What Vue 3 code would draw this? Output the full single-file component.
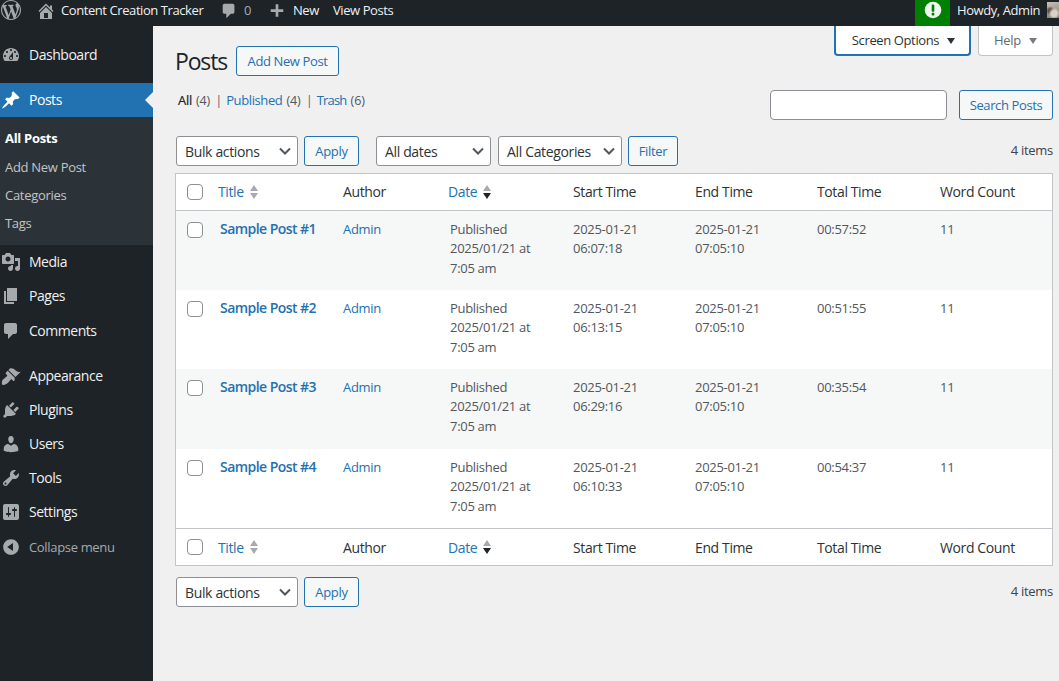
<script setup>
const icons = {
  wp: 'M20 10c0-5.51-4.49-10-10-10C4.48 0 0 4.49 0 10c0 5.52 4.48 10 10 10 5.51 0 10-4.48 10-10zM7.78 15.37L4.37 6.22c.55-.02 1.17-.08 1.17-.08.5-.06.44-1.13-.06-1.11 0 0-1.45.11-2.37.11-.18 0-.37 0-.58-.01C4.12 2.69 6.87 1.11 10 1.11c2.33 0 4.45.87 6.05 2.34-.68-.11-1.65.39-1.65 1.58 0 .74.45 1.36.9 2.1.35.61.55 1.36.55 2.46 0 1.49-1.4 5-1.4 5l-3.03-8.37c.54-.02.82-.17.82-.17.5-.05.44-1.25-.06-1.22 0 0-1.44.12-2.38.12-.87 0-2.33-.12-2.33-.12-.5-.03-.56 1.2-.06 1.22l.92.08 1.26 3.41zM17.41 10c.24-.64.74-1.87.43-4.25.7 1.29 1.05 2.71 1.05 4.25 0 3.29-1.73 6.24-4.4 7.78.97-2.59 1.94-5.2 2.92-7.78zM6.1 18.09C3.12 16.65 1.11 13.53 1.11 10c0-1.3.23-2.48.72-3.59C3.25 10.3 4.67 14.2 6.1 18.09zm4.03-6.63l2.58 6.98c-.86.29-1.76.45-2.71.45-.79 0-1.57-.11-2.29-.33.81-2.38 1.62-4.74 2.42-7.1z',
  home: 'M16 8.5l1.53 1.53-1.06 1.06L10 4.62l-6.47 6.47-1.06-1.06L10 2.5l4 4v-2h2v4zm-6-2.46l6 5.99V18H4v-5.97zM12 17v-5H8v5h4z',
  comment: 'M5 2h9c1.1 0 2 .9 2 2v7c0 1.1-.9 2-2 2h-2l-5 5v-5H5c-1.1 0-2-.9-2-2V4c0-1.1.9-2 2-2z',
  plus: 'M17 8v3h-5.5v5.5h-3V11H3V8h5.5V2.5h3V8z',
  dashboard: 'M3.76 16h12.48c1.1-1.37 1.76-3.11 1.76-5 0-4.42-3.58-8-8-8s-8 3.58-8 8c0 1.89.66 3.63 1.76 5zM10 4c.55 0 1 .45 1 1s-.45 1-1 1-1-.45-1-1 .45-1 1-1zM6 6c.55 0 1 .45 1 1s-.45 1-1 1-1-.45-1-1 .45-1 1-1zm8 0c.55 0 1 .45 1 1s-.45 1-1 1-1-.45-1-1 .45-1 1-1zm-5.37 5.55L12 7v6c0 1.1-.9 2-2 2s-2-.9-2-2c0-.57.24-1.08.63-1.45zM4 10c.55 0 1 .45 1 1s-.45 1-1 1-1-.45-1-1 .45-1 1-1zm12 0c.55 0 1 .45 1 1s-.45 1-1 1-1-.45-1-1 .45-1 1-1zm-5 3c0-.55-.45-1-1-1s-1 .45-1 1 .45 1 1 1 1-.45 1-1z',
  pin: 'M10.44 3.02l1.82-1.82 6.36 6.35-1.83 1.82c-1.05-.68-2.48-.57-3.41.36l-.75.75c-.92.93-1.04 2.35-.35 3.41l-1.83 1.82-2.41-2.41-2.8 2.79c-.42.42-3.38 2.71-3.8 2.29s1.86-3.39 2.28-3.81l2.79-2.79L4.1 9.36l1.83-1.82c1.05.69 2.48.57 3.4-.36l.75-.75c.93-.92 1.05-2.35.36-3.41z',
  media: 'M13 11V4c0-.55-.45-1-1-1h-1.67L9 1H5L3.67 3H2c-.55 0-1 .45-1 1v7c0 .55.45 1 1 1h10c.55 0 1-.45 1-1zM7 4.5c1.38 0 2.5 1.12 2.5 2.5S8.38 9.5 7 9.5 4.5 8.38 4.5 7 5.62 4.5 7 4.5zM14 6h5v10.5c0 1.38-1.12 2.5-2.5 2.5S14 17.88 14 16.5s1.12-2.5 2.5-2.5c.17 0 .34.02.5.05V9h-3V6zm-4 8.05V13h2v3.5c0 1.38-1.12 2.5-2.5 2.5S7 17.88 7 16.5 8.12 14 9.5 14c.17 0 .34.02.5.05z',
  pages: 'M6 15V2h10v13H6zm-1 1h8v2H3V5h2v11z',
  brush: 'M14.48 11.06L7.41 3.99l1.5-1.5c.5-.56 2.3-.47 3.51.32 1.21.8 1.43 1.28 2.91 2.1 1.18.64 2.45 1.26 4.45.85zm-.71.71L6.7 4.7 4.93 6.47c-.39.39-.39 1.02 0 1.41l1.06 1.06c.39.39.39 1.03 0 1.42-.6.6-1.43 1.11-2.21 1.69-.35.26-.7.53-1.01.84C1.43 13.23.28 16.01 1.2 18.8c1.69.53 4.49-.58 5.84-1.93.31-.31.58-.66.85-1.02.57-.78 1.08-1.61 1.69-2.21.39-.39 1.02-.39 1.41 0l1.06 1.06c.39.39 1.02.39 1.41 0z',
  plugin: 'M13.11 4.36L9.87 7.6 8 5.73l3.24-3.24c.35-.34 1.05-.2 1.56.32.52.51.66 1.21.31 1.55zm-8 1.77l.91-1.12 9.01 9.01-1.19.84c-.71.71-2.63 1.16-3.82 1.16H6.14L4.9 17.26c-.59.59-1.54.59-2.12 0-.59-.58-.59-1.53 0-2.12l1.24-1.24v-3.88c0-1.13.4-3.19 1.09-3.89zm7.26 3.97l3.24-3.24c.34-.35 1.04-.21 1.55.31.52.51.66 1.21.31 1.55l-3.24 3.25z',
  users: 'M10 9.25c-2.27 0-2.73-3.44-2.73-3.44C7 4.02 7.82 2 9.97 2c2.16 0 2.98 2.02 2.71 3.81 0 0-.41 3.44-2.68 3.44zm0 2.57L12.72 10c2.39 0 4.52 2.33 4.52 4.53v2.49s-3.65 1.13-7.24 1.13c-3.65 0-7.24-1.13-7.24-1.13v-2.49c0-2.25 1.94-4.48 4.47-4.48z',
  tools: 'M16.68 9.77c-1.34 1.34-3.3 1.67-4.95.99l-5.41 6.52c-.99.99-2.59.99-3.58 0s-.99-2.59 0-3.57l6.52-5.42c-.68-1.65-.35-3.61.99-4.95 1.28-1.28 3.12-1.62 4.72-1.06l-2.89 2.89 2.82 2.82 2.86-2.87c.53 1.58.18 3.39-1.08 4.65zM3.81 16.21c.4.39 1.04.39 1.43 0 .4-.4.4-1.04 0-1.43-.39-.4-1.03-.4-1.43 0-.39.39-.39 1.03 0 1.43z',
  settings: 'M18 16V4c0-1.1-.9-2-2-2H4c-1.1 0-2 .9-2 2v12c0 1.1.9 2 2 2h12c1.1 0 2-.9 2-2zM8 11h1c.55 0 1 .45 1 1s-.45 1-1 1H8v1.5c0 .28-.22.5-.5.5s-.5-.22-.5-.5V13H6c-.55 0-1-.45-1-1s.45-1 1-1h1V5.5c0-.28.22-.5.5-.5s.5.22.5.5V11zm5-2h-1c-.55 0-1-.45-1-1s.45-1 1-1h1V5.5c0-.28.22-.5.5-.5s.5.22.5.5V7h1c.55 0 1 .45 1 1s-.45 1-1 1h-1v5.5c0 .28-.22.5-.5.5s-.5-.22-.5-.5V9z',
  collapse: 'M10 2.16c4.33 0 7.84 3.51 7.84 7.84s-3.51 7.84-7.84 7.84S2.16 14.33 2.16 10 5.71 2.16 10 2.16zm2 11.72V6.12L6.18 9.97z'
}
const menu = [
  { label: 'Dashboard', icon: 'dashboard' },
  { label: 'Posts', icon: 'pin', current: true, cls: 'sep' },
  { label: 'Media', icon: 'media' },
  { label: 'Pages', icon: 'pages' },
  { label: 'Comments', icon: 'comment', cls: 'nudge' },
  { label: 'Appearance', icon: 'brush', cls: 'sep' },
  { label: 'Plugins', icon: 'plugin' },
  { label: 'Users', icon: 'users' },
  { label: 'Tools', icon: 'tools' },
  { label: 'Settings', icon: 'settings' }
]
const subs = ['All Posts', 'Add New Post', 'Categories', 'Tags']
const posts = [
  { t: 'Sample Post #1', s: '06:07:18', total: '00:57:52' },
  { t: 'Sample Post #2', s: '06:13:15', total: '00:51:55' },
  { t: 'Sample Post #3', s: '06:29:16', total: '00:35:54' },
  { t: 'Sample Post #4', s: '06:10:33', total: '00:54:37' }
]
</script>

<template>
  <div class="page">
    <header class="bar">
      <svg class="wp" viewBox="0 0 20 20"><path :d="icons.wp" /></svg>
      <svg class="home" viewBox="0 0 20 20"><path :d="icons.home" /></svg>
      <span class="site">Content Creation Tracker</span>
      <svg class="bub" viewBox="0 0 20 20"><path :d="icons.comment" /></svg>
      <span class="zero">0</span>
      <svg class="plus" viewBox="0 0 20 20"><path :d="icons.plus" /></svg>
      <span class="new">New</span>
      <span class="view">View Posts</span>
      <span class="alert">
        <svg width="18" height="18" viewBox="0 0 18 18"><circle cx="9" cy="9" r="8.3" fill="#f0f6f0" /><rect x="7.7" y="3.6" width="2.6" height="7.2" rx=".8" fill="#008000" /><rect x="7.7" y="11.8" width="2.6" height="2.6" rx=".6" fill="#008000" /></svg>
      </span>
      <span class="howdy">Howdy, Admin</span>
      <span class="avatar"></span>
    </header>

    <div class="body">
      <aside class="side">
        <nav class="menu">
          <template v-for="m in menu" :key="m.label">
            <a class="item" :class="[m.cls, { current: m.current }]">
              <svg class="mi" viewBox="0 0 20 20"><path :d="icons[m.icon]" /></svg>
              <span>{{ m.label }}</span>
            </a>
            <div v-if="m.current" class="sub">
              <a v-for="(s, i) in subs" :key="s" :class="{ on: i === 0 }">{{ s }}</a>
            </div>
          </template>
          <a class="item collapse">
            <svg class="mi" viewBox="0 0 20 20"><path :d="icons.collapse" /></svg>
            <span>Collapse menu</span>
          </a>
        </nav>
      </aside>

      <main class="main">
        <div class="meta">
          <button class="tab active">Screen Options <i class="caret"></i></button>
          <button class="tab">Help <i class="caret gray"></i></button>
        </div>

        <div class="head">
          <h1>Posts</h1>
          <button class="btn add">Add New Post</button>
        </div>

        <div class="filters">
          <div class="views">
            <b>All</b> <em>(4)</em> <u>|</u> <a>Published</a> <em>(4)</em> <u>|</u> <a class="trash">Trash</a> <em>(6)</em>
          </div>
          <div class="search">
            <input class="inp" type="text" />
            <button class="btn">Search Posts</button>
          </div>
        </div>

        <div class="nav top">
          <div class="sel w122"><span>Bulk actions</span><svg class="chev" viewBox="0 0 16 16"><path d="M3 5.5l5 5 5-5" /></svg></div>
          <button class="btn apply">Apply</button>
          <div class="sel w115 ml"><span>All dates</span><svg class="chev" viewBox="0 0 16 16"><path d="M3 5.5l5 5 5-5" /></svg></div>
          <div class="sel w124"><span>All Categories</span><svg class="chev" viewBox="0 0 16 16"><path d="M3 5.5l5 5 5-5" /></svg></div>
          <button class="btn filter">Filter</button>
          <span class="count">4 items</span>
        </div>

        <table class="tbl">
          <colgroup>
            <col class="c0" /><col class="c1" /><col class="c2" /><col class="c3" /><col class="c4" /><col class="c5" /><col class="c6" /><col class="c7" />
          </colgroup>
          <thead>
            <tr>
              <th class="cb"><span class="check"></span></th>
              <th class="lnk ttl-h"><span class="th-in">Title<span class="sort"><i class="up"></i><i class="dn"></i></span></span></th>
              <th>Author</th>
              <th class="lnk"><span class="th-in">Date<span class="sort dark"><i class="up"></i><i class="dn"></i></span></span></th>
              <th>Start Time</th><th>End Time</th><th>Total Time</th><th>Word Count</th>
            </tr>
          </thead>
          <tbody>
            <tr v-for="p in posts" :key="p.t">
              <td class="cb"><span class="check"></span></td>
              <td class="ttl"><a>{{ p.t }}</a></td>
              <td><a>Admin</a></td>
              <td class="dt">Published<br />2025/01/21 at<br />7:05 am</td>
              <td>2025-01-21<br />{{ p.s }}</td>
              <td>2025-01-21<br />07:05:10</td>
              <td>{{ p.total }}</td>
              <td>11</td>
            </tr>
          </tbody>
          <tfoot>
            <tr>
              <th class="cb"><span class="check"></span></th>
              <th class="lnk ttl-h"><span class="th-in">Title<span class="sort"><i class="up"></i><i class="dn"></i></span></span></th>
              <th>Author</th>
              <th class="lnk"><span class="th-in">Date<span class="sort dark"><i class="up"></i><i class="dn"></i></span></span></th>
              <th>Start Time</th><th>End Time</th><th>Total Time</th><th>Word Count</th>
            </tr>
          </tfoot>
        </table>

        <div class="nav bottom">
          <div class="sel w122"><span>Bulk actions</span><svg class="chev" viewBox="0 0 16 16"><path d="M3 5.5l5 5 5-5" /></svg></div>
          <button class="btn apply">Apply</button>
          <span class="count">4 items</span>
        </div>
      </main>
    </div>
  </div>
</template>

<style>
html, body { margin: 0; background: #f0f0f1; overflow: hidden; }
</style>

<style scoped>
.page { width: 1059px; height: 681px; display: flex; flex-direction: column; font: 13px/19.5px "Open Sans", "Noto Sans", sans-serif; letter-spacing: -0.3px; color: #3c434a; overflow: hidden; }
.bar { height: 26px; flex: none; background: #1d2327; color: #f0f0f1; display: flex; align-items: flex-start; line-height: 21px; letter-spacing: -0.42px; white-space: nowrap; position: relative; z-index: 2; }
.bar svg path { fill: #a7aaad; }
.wp { width: 20px; height: 20px; margin: 0 0 0 1px; flex: none; }
.home { width: 20px; height: 20px; margin: 1px 0 0 15px; flex: none; }
.site { margin-left: 5px; width: 160px; flex: none; }
.bub { width: 18px; height: 18px; margin: 2px 0 0 -1px; flex: none; }
.zero { margin-left: 6px; color: #a7aaad; width: 24px; flex: none; }
.plus { width: 18px; height: 18px; margin-top: 2px; flex: none; }
.new { margin-left: 7px; width: 40px; flex: none; }
.view { width: 582px; flex: none; }
.alert { width: 35px; height: 26px; background: #008000; display: flex; align-items: flex-start; justify-content: center; padding-top: 1px; box-sizing: border-box; flex: none; }
.howdy { margin-left: 7px; width: 90px; flex: none; }
.avatar { width: 16px; height: 16px; margin-top: 2px; flex: none; background: radial-gradient(circle at 45% 72%, #d8d2c8 0 20%, transparent 40%), radial-gradient(circle at 20% 55%, #5f5348 0 12%, transparent 30%), linear-gradient(160deg, #c9c2b8 0%, #a2988b 55%, #7a6d60 100%); }
.body { flex: 1; display: flex; min-height: 0; }
.side { width: 153px; flex: none; background: #1d2327; }
.menu { padding-top: 12px; }
.item { height: 34px; display: flex; align-items: center; color: #f0f0f1; font-size: 14px; letter-spacing: -0.47px; position: relative; }
.item .mi { width: 20px; height: 20px; margin: 0 8px 0 1px; flex: none; }
.item .mi path { fill: #a7aaad; }
.item.sep { margin-top: 11px; }
.item.nudge { margin-top: 1px; }
.item.current { background: #2271b1; color: #fff; }
.item.current .mi path { fill: #fff; }
.item.current::after { content: ""; position: absolute; right: 0; top: 9px; border: 8px solid transparent; border-right-color: #f0f0f1; border-left-width: 0; }
.item.collapse { margin-top: 1px; color: #a7aaad; font-size: 13px; letter-spacing: -0.33px; }
.item.collapse span { padding-top: 2px; }
.sub { background: #2c3338; padding: 7px 0 8px; height: 128px; box-sizing: border-box; display: flex; flex-direction: column; }
.sub a { height: 28px; line-height: 28px; padding-left: 5px; color: #c3c4c7; }
.sub a.on { height: 29px; color: #fff; font-weight: 700; }
.main { flex: 1; padding: 0 6px 0 23px; min-width: 0; }
.meta { display: flex; justify-content: flex-end; gap: 7px; height: 30px; margin-bottom: -10px; }
.tab { height: 30px; box-sizing: border-box; background: #fff; border: 1px solid #c3c4c7; border-top: 0; border-radius: 0 0 4px 4px; font: inherit; letter-spacing: inherit; color: #646970; width: 75px; padding: 0; }
.tab.active { width: 137px; border: 2px solid #2271b1; border-top: 0; color: #2c3338; letter-spacing: -0.38px; padding: 2px 0 0 2px; }
.caret { display: inline-block; border: 4.5px solid transparent; border-top: 6px solid #2c3338; border-bottom: 0; margin-left: 5px; vertical-align: 1px; }
.caret.gray { border-top-color: #787c82; }
.head { display: flex; align-items: center; height: 30px; gap: 9px; }
h1 { margin: 0 0 0 -1px; font-size: 23px; font-weight: 400; color: #1d2327; line-height: 30px; letter-spacing: -1.15px; }
.btn { height: 30px; box-sizing: border-box; border: 1px solid #2271b1; border-radius: 3px; background: #f6f7f7; color: #2271b1; font: inherit; letter-spacing: inherit; padding: 2px 0 0; }
.add { width: 103px; letter-spacing: -0.38px; }
.filters { display: flex; justify-content: space-between; margin-top: 14px; height: 30px; }
.views { padding: 1px 0 0 2px; color: #646970; font-size: 13px; word-spacing: 1px; }
.views b { color: #1d2327; font-weight: 400; -webkit-text-stroke: .2px #1d2327; }
.views em { font-style: normal; font-size: 12.5px; letter-spacing: -0.1px; color: #50575e; }
.views u { text-decoration: none; margin-left: 1px; color: #646970; }
.views a, .lnk, td a { color: #2271b1; }
.views a { letter-spacing: -0.4px; }
.views a.trash { letter-spacing: -0.8px; }
.search { display: flex; gap: 12px; }
.inp { width: 177px; height: 30px; box-sizing: border-box; border: 1px solid #8c8f94; border-radius: 4px; background: #fff; margin: 0; }
.search .btn { width: 94px; letter-spacing: -0.38px; }
.nav { display: flex; align-items: center; height: 30px; }
.top { margin-top: 16px; }
.bottom { margin-top: 11px; }
.sel { height: 30px; box-sizing: border-box; border: 1px solid #8c8f94; border-radius: 3px; background: #fff; color: #2c3338; padding-left: 8px; display: flex; justify-content: space-between; align-items: center; font-size: 14px; letter-spacing: -0.35px; }
.sel span { padding-top: 0.5px; }
.chev { width: 16px; height: 16px; margin-right: 4px; }
.chev path { fill: none; stroke: #50575e; stroke-width: 2; }
.w122 { width: 122px; }
.w115 { width: 115px; }
.w124 { width: 124px; margin-left: 7px; }
.ml { margin-left: 17px; }
.apply { width: 55px; margin-left: 6px; }
.filter { width: 50px; margin-left: 6px; }
.count { margin-left: auto; color: #3c434a; }
.tbl { width: 878px; margin: 7px 0 0 -1px; border: 1px solid #c3c4c7; border-collapse: separate; border-spacing: 0; background: #fff; table-layout: fixed; }
.c0 { width: 35px; } .c1 { width: 124px; } .c2 { width: 105px; } .c3 { width: 125px; } .c4 { width: 122px; } .c5 { width: 122px; } .c6 { width: 123px; } .c7 { width: 120px; }
th { text-align: left; font-weight: 400; padding: 8px; color: #2c3338; height: 19.5px; font-size: 14px; letter-spacing: -0.38px; }
thead th { border-bottom: 1px solid #c3c4c7; }
tfoot th { border-top: 1px solid #c3c4c7; padding-top: 9px; }
th.cb, td.cb { padding: 0 0 0 11px; vertical-align: top; }
th.cb { vertical-align: middle; }
td.cb { padding-top: 11px; }
tfoot th.cb { padding-top: 1px; }
.check { display: block; width: 16px; height: 16px; box-sizing: border-box; border: 1px solid #8c8f94; border-radius: 4px; background: #fff; }
th.lnk { color: #2271b1; }
th.ttl-h { padding-left: 7px; }
.th-in { display: inline-flex; align-items: center; gap: 6px; }
.sort { display: inline-flex; flex-direction: column; gap: 2px; }
.sort i { display: block; border: 4.5px solid transparent; }
.sort .up { border-top: 0; border-bottom: 6px solid #a7aaad; }
.sort .dn { border-bottom: 0; border-top: 6px solid #a7aaad; }
.sort.dark .dn { border-top-color: #1d2327; }
td { padding: 9px 8px 7px; vertical-align: top; color: #50575e; }
tbody tr { height: 79px; }
tbody tr:nth-child(3) { height: 80px; }
tbody tr:nth-child(odd) { background: #f6f7f7; }
td.ttl { padding: 8px 8px 8px 9px; font-size: 14px; font-weight: 600; letter-spacing: -0.55px; }
td.dt { padding-left: 10px; }
</style>
